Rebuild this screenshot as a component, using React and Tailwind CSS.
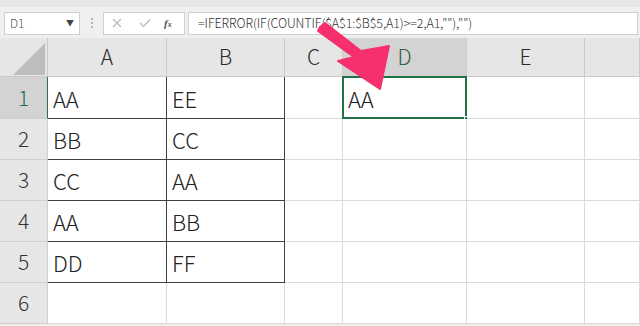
import React from 'react';

const cols = ['A', 'B', 'C', 'D', 'E', ''];
const data = [
  ['AA', 'EE'],
  ['BB', 'CC'],
  ['CC', 'AA'],
  ['AA', 'BB'],
  ['DD', 'FF'],
];

const font = { fontFamily: '"Noto Sans CJK JP", "Noto Sans", sans-serif' };

const Cell = ({ row, col }) => {
  // A1:B5 has a dark outline
  const boxed = row < 5 && col < 2;
  const value = row < 5 && col < 2 ? data[row][col] : row === 0 && col === 3 ? 'AA' : '';
  const selected = row === 0 && col === 3;
  return (
    <div
      className={`relative flex items-center pl-[5px] pt-[1px] text-[22px] font-light text-[#222] bg-white border-r border-b ${boxed ? 'border-[#3f3f3f]' : 'border-[#dadada]'}`}
    >
      {value}
      {selected && (
        <>
          <div className="absolute -left-px -top-px right-[-1px] bottom-[-1px] border-2 border-[#217346]" />
          <div className="absolute right-[-4px] bottom-[-4px] w-[6px] h-[6px] bg-[#217346] border border-white" />
        </>
      )}
    </div>
  );
};

const App = () => {
  return (
    <div className="relative w-[640px] h-[326px] overflow-hidden bg-[#eeeeee]" style={font}>
      {/* formula bar */}
      <div className="flex items-center h-[38px] pt-[1px] pl-[4px] pr-[2px] bg-[#efefef] border-t-[7px] border-[#e6e6e6]">
        <div className="flex items-center justify-between w-[76px] h-[23px] bg-white border border-[#cfcfcf] pl-[5px] pr-[5px] text-[12px] font-light text-[#555]">
          <span>D1</span>
          <span className="text-[8px] text-[#444]">▼</span>
        </div>
        <div className="flex flex-col items-center justify-center gap-[2px] w-[23px]">
          <span className="w-[2px] h-[2px] bg-[#b5b5b5]" />
          <span className="w-[2px] h-[2px] bg-[#b5b5b5]" />
          <span className="w-[2px] h-[2px] bg-[#b5b5b5]" />
        </div>
        <div className="flex items-center w-[82px] h-[23px] bg-white border border-[#cfcfcf] text-[#bdbdbd]">
          <svg className="ml-[8px]" width="10" height="10" viewBox="0 0 10 10">
            <path d="M1 1L9 9M9 1L1 9" stroke="#b8b8b8" strokeWidth="1.2" fill="none" />
          </svg>
          <svg className="ml-[17px]" width="12" height="10" viewBox="0 0 12 10">
            <path d="M1 5L4.5 8.5L11 1.5" stroke="#b8b8b8" strokeWidth="1.2" fill="none" />
          </svg>
          <span className="ml-[13px] text-[11px] italic font-semibold text-[#555]" style={{ fontFamily: '"Liberation Serif", serif' }}>
            f<span className="text-[8px]">x</span>
          </span>
        </div>
        <div className="flex items-center flex-1 h-[23px] ml-[3px] bg-white border border-[#cfcfcf] pl-[9px] text-[12.5px] font-light text-[#333] tracking-[-0.1px]">
          =IFERROR(IF(COUNTIF($A$1:$B$5,A1)&gt;=2,A1,""),"")
        </div>
      </div>

      {/* sheet */}
      <div className="grid grid-cols-[48px_119px_118px_58px_124px_118px_1fr] grid-rows-[39px_42px_41px_41px_41px_41px_41px] bg-white">
        <div className="relative bg-[#e6e6e6] border-r border-b border-[#c9c9c9]">
          <svg className="absolute left-0 top-0" width="48" height="39" viewBox="0 0 48 39">
            <path d="M13 37H45V5Z" fill="#bdbdbd" />
          </svg>
        </div>
        {cols.map((c, i) => (
          <div
            key={i}
            className={`flex items-center justify-center text-[21px] font-light border-r border-b border-[#cbcbcb] ${c === 'D' ? 'bg-[#d3d3d3] text-[#2f5e44]' : 'bg-[#e6e6e6] text-[#2b2b2b]'}`}
          >
            {c}
          </div>
        ))}
        {[0, 1, 2, 3, 4, 5].map(r => (
          <React.Fragment key={r}>
            <div
              className={`flex items-center justify-center text-[21px] font-light border-b border-[#cfcfcf] border-r ${r === 0 ? 'bg-[#d3d3d3] text-[#217346] border-r-[#217346]' : 'bg-[#e6e6e6] text-[#333]'}`}
            >
              {r + 1}
            </div>
            {[0, 1, 2, 3, 4, 5].map(c => (
              <Cell key={c} row={r} col={c} />
            ))}
          </React.Fragment>
        ))}
      </div>

      {/* pink arrow */}
      <svg className="absolute left-0 top-0 pointer-events-none" width="640" height="326" viewBox="0 0 640 326">
        <path
          d="M320 27 L325 23 L361 51 L389 46 L380 89 L338 61 L354 57 L318 31 Z"
          fill="#f5306c"
          stroke="#f5306c"
          strokeWidth="2"
          strokeLinejoin="round"
        />
      </svg>
    </div>
  );
};

export default App;
